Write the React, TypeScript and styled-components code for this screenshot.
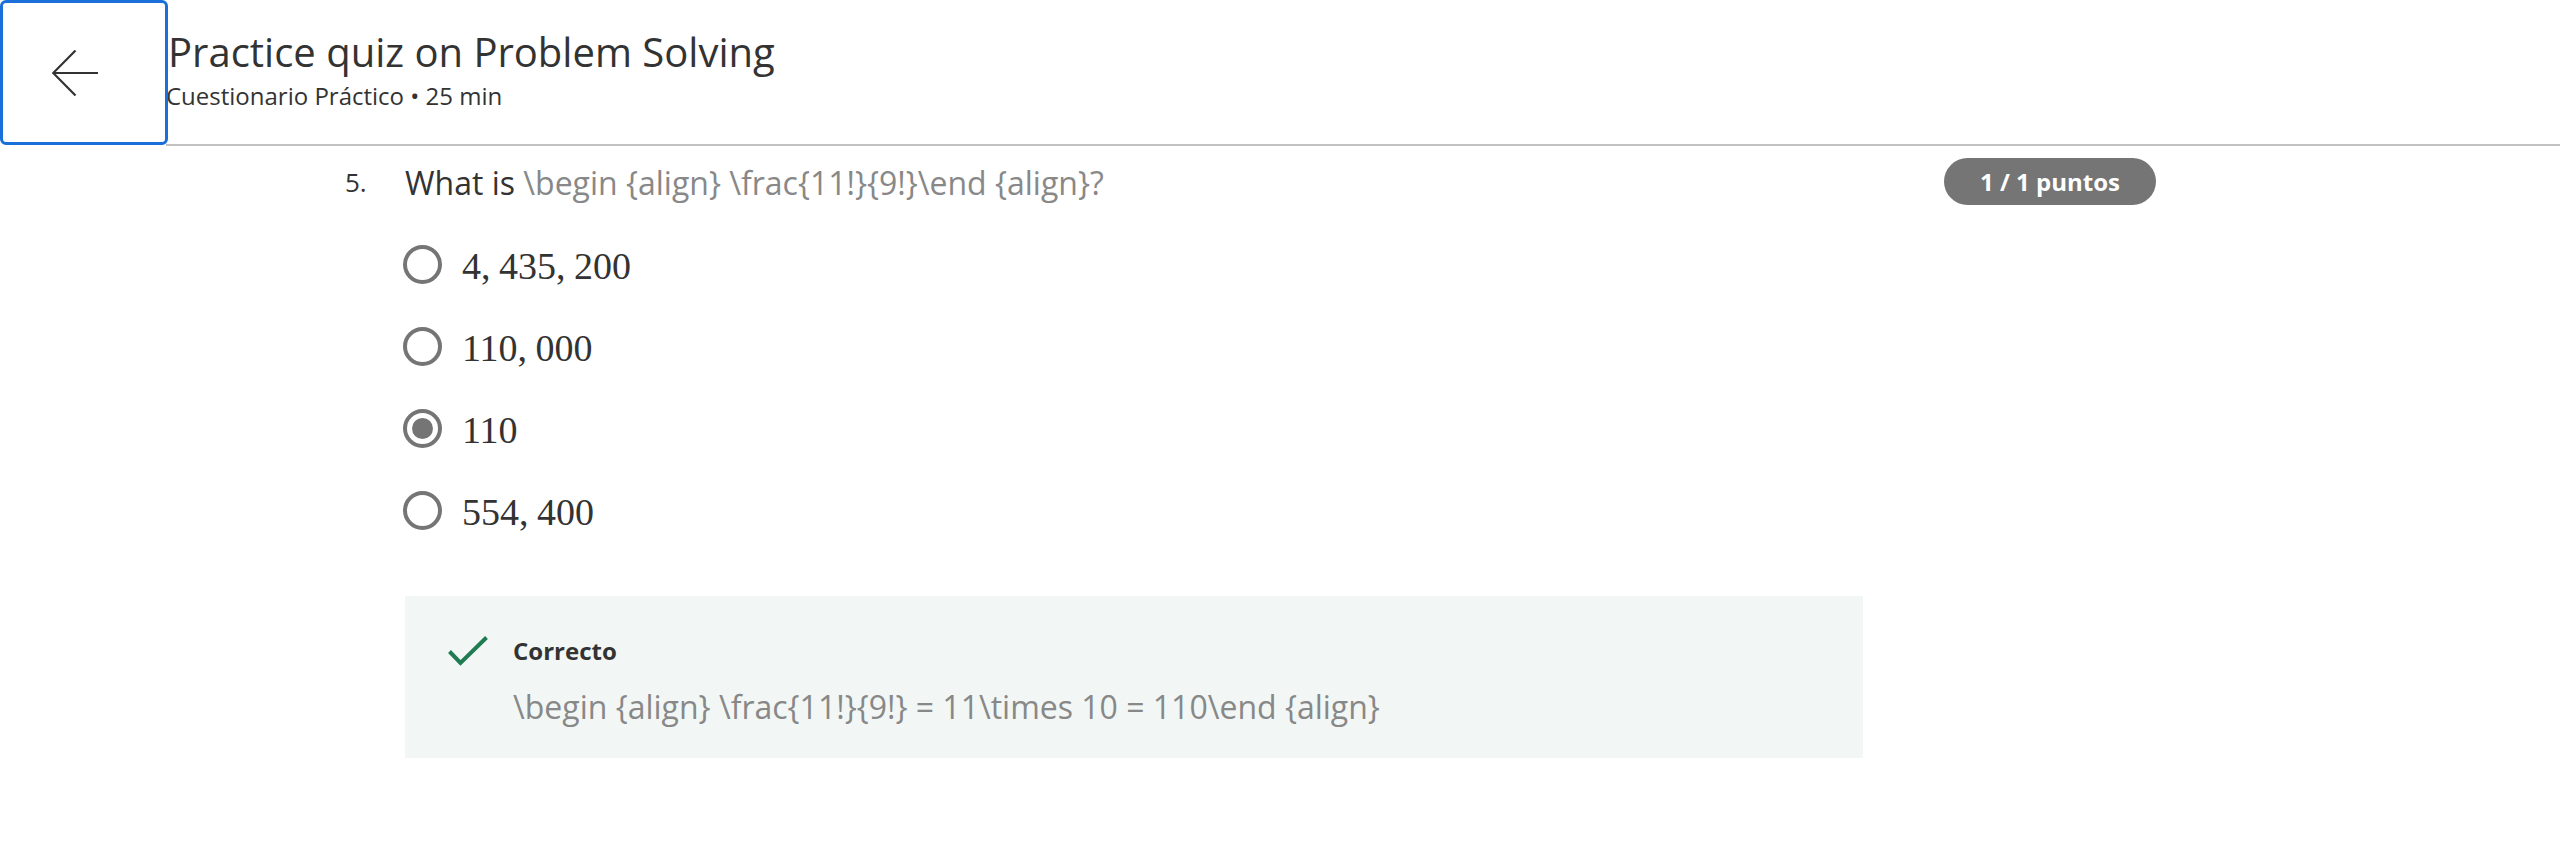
import React from "react";
import styled, { createGlobalStyle } from "styled-components";

const GlobalStyle = createGlobalStyle`
  html, body {
    margin: 0;
    padding: 0;
    background: #ffffff;
  }
  body {
    font-family: "Open Sans", "Noto Sans", Arial, sans-serif;
    color: #333333;
  }
  * { box-sizing: border-box; }
`;

const Page = styled.div`
  width: 2560px;
  min-height: 842px;
  background: #ffffff;
`;

const Header = styled.header`
  display: flex;
  align-items: stretch;
  height: 146px;
`;

const BackButton = styled.button`
  z-index: 1;
  flex: 0 0 168px;
  height: 145px;
  display: flex;
  align-items: center;
  padding: 0 0 0 49px;
  margin: 0;
  background: #ffffff;
  border: 3px solid #1b6fd8;
  border-radius: 6px;
  cursor: pointer;
`;

const HeaderText = styled.div`
  flex: 1;
  margin-left: -2px;
  padding-top: 28px;
  border-bottom: 2px solid #c2c2c2;
`;

const Title = styled.h1`
  margin: 0;
  font-size: 40px;
  line-height: 48px;
  font-weight: 400;
  color: #333333;
  padding-left: 2px;
`;

const Subtitle = styled.div`
  margin-top: 5px;
  font-size: 24px;
  line-height: 30px;
  color: #333333;
`;

const Main = styled.main`
  padding: 12px 0 0 345px;
`;

const QuestionRow = styled.section`
  display: flex;
  width: 1811px;
`;

const QuestionNumber = styled.div`
  flex: 0 0 60px;
  padding-top: 7px;
  font-size: 26px;
  line-height: 34px;
  color: #333333;
`;

const QuestionBody = styled.div`
  flex: 1;
  display: flex;
  flex-direction: column;
`;

const PromptRow = styled.div`
  display: flex;
  align-items: flex-start;
  justify-content: space-between;
`;

const Prompt = styled.div`
  padding-top: 3px;
  font-size: 32px;
  line-height: 44px;
  color: #333333;
`;

const Latex = styled.span`
  color: #888888;
`;

const ScoreBadge = styled.div`
  height: 47px;
  padding: 0 36px;
  display: flex;
  align-items: center;
  border-radius: 24px;
  background: #757575;
  color: #ffffff;
  font-size: 24px;
  font-weight: 700;
  white-space: nowrap;
`;

const OptionList = styled.div`
  margin: 18px 0 0 -2px;
  display: flex;
  flex-direction: column;
`;

const Option = styled.label`
  display: flex;
  align-items: center;
  gap: 20px;
  height: 82px;
  cursor: pointer;
`;

const Radio = styled.span<{ $checked?: boolean }>`
  flex: 0 0 39px;
  width: 39px;
  height: 39px;
  border: 4px solid #757575;
  border-radius: 50%;
  display: flex;
  align-items: center;
  justify-content: center;
  &::after {
    content: "";
    display: ${(p) => (p.$checked ? "block" : "none")};
    width: 21px;
    height: 21px;
    border-radius: 50%;
    background: #757575;
  }
`;

const MathText = styled.span`
  font-family: "Liberation Serif", "Times New Roman", serif;
  font-size: 38px;
  line-height: 42px;
  word-spacing: -1px;
  padding-top: 4px;
  color: #333333;
`;

const Feedback = styled.div`
  margin-top: 45px;
  width: 1458px;
  padding: 40px 40px 29px 43px;
  background: #f2f7f5;
`;

const FeedbackHead = styled.div`
  display: flex;
  align-items: flex-start;
  gap: 25px;
`;

const FeedbackTitle = styled.div`
  font-size: 24px;
  line-height: 30px;
  font-weight: 700;
  color: #333333;
`;

const Explanation = styled.div`
  margin: 19px 0 0 65px;
  font-size: 32px;
  line-height: 44px;
  color: #888888;
`;

const ArrowIcon = () => (
  <svg width="46" height="46" viewBox="0 0 46 46" fill="none">
    <path d="M1 23 H46" stroke="#333" strokeWidth="2.2" />
    <path d="M23.5 0.5 L1.2 23 L23.5 45.5" stroke="#333" strokeWidth="2.2" strokeLinejoin="miter" />
  </svg>
);

const CheckIcon = () => (
  <svg width="40" height="30" viewBox="0 0 40 30" fill="none">
    <path d="M1.5 15.5 L12.5 27 L38.5 1.5" stroke="#1f7c52" strokeWidth="4" />
  </svg>
);

const options = [
  { label: "4, 435, 200", checked: false },
  { label: "110, 000", checked: false },
  { label: "110", checked: true },
  { label: "554, 400", checked: false },
];

export default function App() {
  return (
    <Page>
      <GlobalStyle />
      <Header>
        <BackButton aria-label="Volver">
          <ArrowIcon />
        </BackButton>
        <HeaderText>
          <Title>Practice quiz on Problem Solving</Title>
          <Subtitle>Cuestionario Práctico • 25 min</Subtitle>
        </HeaderText>
      </Header>
      <Main>
        <QuestionRow>
          <QuestionNumber>5.</QuestionNumber>
          <QuestionBody>
            <PromptRow>
              <Prompt>
                What is <Latex>\begin {"{align}"} \frac{"{11!}{9!}"}\end {"{align}"}?</Latex>
              </Prompt>
              <ScoreBadge>1 / 1 puntos</ScoreBadge>
            </PromptRow>
            <OptionList>
              {options.map((o) => (
                <Option key={o.label}>
                  <Radio $checked={o.checked} />
                  <MathText>{o.label}</MathText>
                </Option>
              ))}
            </OptionList>
            <Feedback>
              <FeedbackHead>
                <CheckIcon />
                <FeedbackTitle>Correcto</FeedbackTitle>
              </FeedbackHead>
              <Explanation>
                \begin {"{align}"} \frac{"{11!}{9!}"} = 11\times 10 = 110\end {"{align}"}
              </Explanation>
            </Feedback>
          </QuestionBody>
        </QuestionRow>
      </Main>
    </Page>
  );
}
